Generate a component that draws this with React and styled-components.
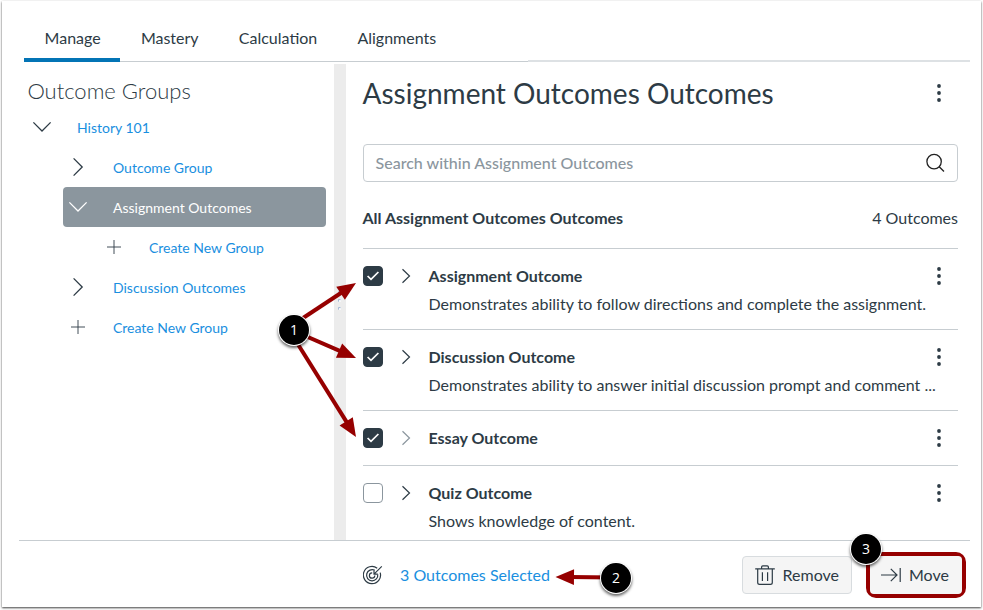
import React from 'react'
import styled, { createGlobalStyle, css } from 'styled-components'

const ink = '#2d3b45'
const link = '#1a8fe0'
const line = '#c7cdd1'
const marker = '#960000'

const GlobalStyle = createGlobalStyle`
  * {
    box-sizing: border-box;
  }
  body {
    margin: 0;
    background: #fff;
    color: ${ink};
    font-family: Lato, "Liberation Sans", sans-serif;
    font-size: 16px;
  }
  h1, h2, h3, p {
    margin: 0;
    font-weight: 400;
  }
  button {
    font: inherit;
    color: inherit;
  }
  svg {
    display: block;
    flex: none;
  }
`

const Frame = styled.div`
  position: relative;
  display: flex;
  flex-direction: column;
  width: 979px;
  height: 606px;
  margin: 1px 2px 3px;
  background: #fff;
  box-shadow: 0 1px 2px rgba(0, 0, 0, 0.75);
`

const TabBar = styled.nav`
  display: flex;
  align-items: flex-end;
  height: 61px;
  margin: 0 11px 0 22px;
  background: linear-gradient(${line}, ${line}) left bottom / 504px 1px no-repeat,
    linear-gradient(#dde1e4, #dde1e4) right bottom / 442px 2px no-repeat;
`

const Tab = styled.a`
  height: 48px;
  padding: 14px 19.6px 0 20.6px;
  line-height: 20px;
  border-bottom: 4px solid ${(props) => (props.$active ? '#0374b5' : 'transparent')};
`

const Body = styled.div`
  display: flex;
  height: 478px;
`

const Sidebar = styled.aside`
  width: 332px;
  padding: 14px 8px 0 25.4px;
`

const SidebarTitle = styled.h2`
  height: 31px;
  font-size: 22px;
  font-weight: 300;
  line-height: 29px;
`

const TreeRow = styled.div`
  display: flex;
  align-items: center;
  height: 40px;
  margin-left: ${(props) => props.$level * 36}px;
  border-radius: 4px;
  font-size: 14px;
  color: ${link};
  ${(props) => props.$selected && css`
    color: #fff;
    background: #8b969e;
  `}
`

const TreeIcon = styled.span`
  display: flex;
  justify-content: center;
  width: 30px;
  margin-right: 19.6px;
  color: ${(props) => (props.$selected ? '#fff' : ink)};
`

const TreeLabel = styled.span`
  line-height: 20px;
  margin-top: 1px;
`

const Splitter = styled.div`
  display: flex;
  flex-direction: column;
  align-items: center;
  justify-content: center;
  gap: 5px;
  width: 12px;
  margin-top: 2px;
  padding: 0 2px 4px 0;
  background: #ececec;
`

const Grip = styled.i`
  width: 3px;
  height: 3px;
  border-radius: 50%;
  background: #fff;
  border-top: 1px solid #9db4d4;
  border-left: 1px solid #9db4d4;
`

const Content = styled.main`
  width: 612px;
  padding: 13px 0 0 16.5px;
  overflow: hidden;
`

const TitleRow = styled.header`
  display: flex;
  align-items: center;
  justify-content: space-between;
  height: 36px;
  padding-right: 17px;
`

const Title = styled.h1`
  font-size: 28px;
  line-height: 34px;
`

const SearchBox = styled.div`
  display: flex;
  align-items: center;
  justify-content: space-between;
  height: 38px;
  margin-top: 33px;
  padding: 0 12px;
  border: 1px solid ${line};
  border-radius: 4px;
  color: #8b969e;
  font-weight: 500;
`

const SearchHint = styled.span`
  margin-bottom: 2px;
`

const Summary = styled.div`
  display: flex;
  align-items: center;
  justify-content: space-between;
  height: 66px;
  padding-top: 5px;
`

const Strong = styled.h3`
  font-size: 16px;
  font-weight: 700;
`

const Item = styled.article`
  display: grid;
  grid-template-columns: 66px 1fr 20px;
  padding: 15px 17px 15px 0;
  border-top: 1px solid ${line};
`

const ItemControls = styled.div`
  display: flex;
  align-items: center;
  gap: 18px;
  height: 24px;
`

const ItemTitle = styled.h3`
  font-size: 16px;
  font-weight: 700;
  line-height: 24px;
`

const ItemMenu = styled.div`
  display: flex;
  align-items: center;
  justify-content: flex-end;
  height: 24px;
`

const Description = styled.p`
  grid-column: 2 / 4;
  margin-top: 5px;
  line-height: 21px;
  white-space: nowrap;
`

const Checkbox = styled.span`
  display: flex;
  align-items: center;
  justify-content: center;
  width: 20px;
  height: 20px;
  border: 1px solid ${(props) => (props.$checked ? ink : '#8b969e')};
  border-radius: 4px;
  background: ${(props) => (props.$checked ? ink : '#fff')};
`

const Footer = styled.footer`
  display: flex;
  align-items: center;
  height: 58px;
  margin: 0 11px 0 17px;
  padding: 0 4px 0 343.5px;
  border-top: 1px solid ${line};
`

const SelectedLink = styled.a`
  margin: 10px auto 0 17.5px;
  color: ${link};
`

const ActionButton = styled.button`
  display: flex;
  align-items: center;
  gap: 8px;
  height: 38px;
  margin-top: 11px;
  padding: 0 12px;
  border: 1px solid #d8dcdf;
  border-radius: 4px;
  background: #f5f5f5;
`

const ActionLabel = styled.span`
  margin-bottom: 2px;
`

const Highlight = styled.div`
  width: 100px;
  margin: 11px 0 0 14px;
  border: 4px solid ${marker};
  border-radius: 10px;
  background: #f5f5f5;

  ${ActionButton} {
    width: 92px;
    margin: 0;
    padding: 0 10px;
    border-color: transparent;
  }
`

const TargetSlot = styled.span`
  margin-top: 10px;
`

const Arrows = styled.svg`
  position: absolute;
  left: -2px;
  top: -1px;
  pointer-events: none;
`

const Step = styled.span`
  position: absolute;
  left: ${(props) => props.$x - 17}px;
  top: ${(props) => props.$y - 16}px;
  width: 30px;
  height: 30px;
  border-radius: 50%;
  background: #000;
  color: #fff;
  font: 14px/29px "Open Sans", "Noto Sans", sans-serif;
  text-align: center;
  box-shadow: 0 0 0 1px #fff, 0 2px 3px 1px rgba(0, 0, 0, 0.6);
`

const Stroke = ({ w, h, d, width = 1.3, color = 'currentColor' }) => (
  <svg width={w} height={h} viewBox={`0 0 ${w} ${h}`} fill="none" stroke={color} strokeWidth={width}>
    <path d={d} />
  </svg>
)

const ChevronDown = () => <Stroke w={20} h={12} d="M1.4 1.4 10 10 18.6 1.4" />
const ChevronRight = () => <Stroke w={12} h={20} d="M1.6 1.4 10.2 10 1.6 18.6" />
const SmallChevron = ({ faded }) => (
  <Stroke w={10} h={16} d="M1.5 1.2 8.5 8 1.5 14.8" width={1.2} color={faded ? '#8b969e' : ink} />
)
const Plus = () => <Stroke w={16} h={16} d="M8 1v14M1 8h14" width={0.9} />
const Check = () => <Stroke w={14} h={12} d="M1.6 6 5 9.4 12.4 2" width={1.7} color="#fff" />

const Dots = () => (
  <svg width="4" height="18" viewBox="0 0 4 18" fill={ink}>
    <circle cx="2" cy="2" r="1.9" />
    <circle cx="2" cy="9" r="1.9" />
    <circle cx="2" cy="16" r="1.9" />
  </svg>
)

const SearchIcon = () => (
  <svg width="20" height="20" viewBox="0 0 20 20" fill="none" stroke="#222" strokeWidth="1.3">
    <circle cx="9.1" cy="8.6" r="7.2" />
    <path d="M14.2 13.8 19 18.5" />
  </svg>
)

const TargetIcon = () => (
  <svg width="20" height="20" viewBox="0 0 20 20" fill="none" stroke={ink} strokeWidth="1.2">
    <path d="M14.2 3.2A8.6 8.6 0 1 0 17.2 7.6" />
    <path d="M11.8 5.3A5.6 5.6 0 1 0 14.7 9.3" />
    <path d="M9.2 7.8A2.7 2.7 0 1 0 11.8 10.6" />
    <path d="M18.8 1.4 11 9.1M11 5.4V9.1H14.8" />
  </svg>
)

const TrashIcon = () => (
  <svg width="20" height="20" viewBox="0 0 20 20" fill="none" stroke={ink} strokeWidth="1.2">
    <path d="M.2 3.9h19.6M6.6 3.8V2q0-1.2 1.2-1.2h4.4q1.2 0 1.2 1.2v1.8M2.7 4v13.4q0 1.9 1.9 1.9h10.8q1.9 0 1.9-1.9V4M7.4 7.2v8.8M12.6 7.2v8.8" />
  </svg>
)

const MoveIcon = () => <Stroke w={20} h={16} d="M0 8h16M9.8 1.8 16 8l-6.2 6.2M19.2 1v14" width={1.2} />

const Arrow = ({ from, to }) => {
  const angle = (Math.atan2(to[1] - from[1], to[0] - from[0]) * 180) / Math.PI
  const length = Math.hypot(to[0] - from[0], to[1] - from[1])
  return (
    <g transform={`translate(${from[0]} ${from[1]}) rotate(${angle})`} fill={marker}>
      <rect y="-2" width={length - 14} height="4" />
      <path d={`M${length} 0l-18.5-7.8v15.6z`} />
    </g>
  )
}

const groups = [
  { label: 'History 101', level: 0, icon: ChevronDown },
  { label: 'Outcome Group', level: 1, icon: ChevronRight },
  { label: 'Assignment Outcomes', level: 1, icon: ChevronDown, selected: true },
  { label: 'Create New Group', level: 2, icon: Plus },
  { label: 'Discussion Outcomes', level: 1, icon: ChevronRight },
  { label: 'Create New Group', level: 1, icon: Plus },
]

const outcomes = [
  {
    title: 'Assignment Outcome',
    description: 'Demonstrates ability to follow directions and complete the assignment.',
    checked: true,
  },
  {
    title: 'Discussion Outcome',
    description: 'Demonstrates ability to answer initial discussion prompt and comment ...',
    checked: true,
  },
  { title: 'Essay Outcome', checked: true },
  { title: 'Quiz Outcome', description: 'Shows knowledge of content.', checked: false },
]

const GroupRow = ({ group }) => {
  const GroupIcon = group.icon
  return (
    <TreeRow $level={group.level} $selected={group.selected}>
      <TreeIcon $selected={group.selected}><GroupIcon /></TreeIcon>
      <TreeLabel>{group.label}</TreeLabel>
    </TreeRow>
  )
}

const OutcomeRow = ({ outcome }) => (
  <Item>
    <ItemControls>
      <Checkbox $checked={outcome.checked}>{outcome.checked && <Check />}</Checkbox>
      <SmallChevron faded={!outcome.description} />
    </ItemControls>
    <ItemTitle>{outcome.title}</ItemTitle>
    <ItemMenu><Dots /></ItemMenu>
    {outcome.description && <Description>{outcome.description}</Description>}
  </Item>
)

const App = () => (
  <>
    <GlobalStyle />
    <Frame>
      <TabBar>
        <Tab $active>Manage</Tab>
        <Tab>Mastery</Tab>
        <Tab>Calculation</Tab>
        <Tab>Alignments</Tab>
      </TabBar>
      <Body>
        <Sidebar>
          <SidebarTitle>Outcome Groups</SidebarTitle>
          {groups.map((group, i) => <GroupRow key={i} group={group} />)}
        </Sidebar>
        <Splitter>
          <Grip />
          <Grip />
          <Grip />
        </Splitter>
        <Content>
          <TitleRow>
            <Title>Assignment Outcomes Outcomes</Title>
            <Dots />
          </TitleRow>
          <SearchBox>
            <SearchHint>Search within Assignment Outcomes</SearchHint>
            <SearchIcon />
          </SearchBox>
          <Summary>
            <Strong>All Assignment Outcomes Outcomes</Strong>
            <span>4 Outcomes</span>
          </Summary>
          {outcomes.map((outcome) => <OutcomeRow key={outcome.title} outcome={outcome} />)}
        </Content>
      </Body>
      <Footer>
        <TargetSlot><TargetIcon /></TargetSlot>
        <SelectedLink>3 Outcomes Selected</SelectedLink>
        <ActionButton>
          <TrashIcon />
          <ActionLabel>Remove</ActionLabel>
        </ActionButton>
        <Highlight>
          <ActionButton>
            <MoveIcon />
            <ActionLabel>Move</ActionLabel>
          </ActionButton>
        </Highlight>
      </Footer>
      <Arrows width="983" height="610" viewBox="0 0 983 610">
        <Arrow from={[294, 324]} to={[356, 283]} />
        <Arrow from={[294, 331]} to={[356, 358]} />
        <Arrow from={[294, 338]} to={[356, 437]} />
        <Arrow from={[614, 577.5]} to={[555.5, 577]} />
      </Arrows>
      <Step $x={294} $y={330}>1</Step>
      <Step $x={616} $y={578}>2</Step>
      <Step $x={866} $y={549}>3</Step>
    </Frame>
  </>
)

export default App
